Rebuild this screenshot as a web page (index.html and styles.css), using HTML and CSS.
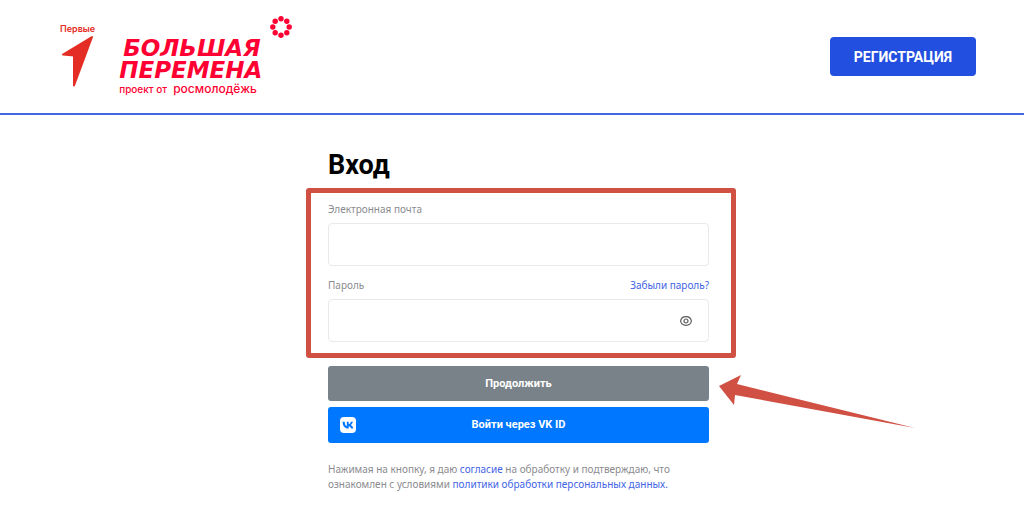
FILE: index.html
```html
<!DOCTYPE html>
<html lang="ru">
<head>
<meta charset="utf-8">
<meta name="viewport" content="width=device-width, initial-scale=1">
<title>Вход</title>
<link rel="stylesheet" href="styles.css">
</head>
<body>
<header class="header">
  <div class="logos">
    <div class="first">
      <span class="first-name">Первые</span>
      <svg class="first-mark" width="34" height="52" viewBox="0 0 34 52" aria-hidden="true"><path d="M31 2 13 50.500V20.500L2 19.500Z" fill="#e42d24" stroke="#e42d24" stroke-width="2" stroke-linejoin="round"/></svg>
    </div>
    <div class="peremena">
      <div class="peremena-title">БОЛЬШАЯ<br>ПЕРЕМЕНА</div>
      <div class="peremena-sub"><span>проект от</span><span class="rosmol">росмолодёжь</span></div>
      <svg class="dots" width="22" height="22" viewBox="0 0 22 22" aria-hidden="true"><g fill="#ff0032"><circle cx="11" cy="2.800" r="2.700"/><circle cx="16.800" cy="5.200" r="2.700"/><circle cx="19.200" cy="11" r="2.700"/><circle cx="16.800" cy="16.800" r="2.700"/><circle cx="11" cy="19.200" r="2.700"/><circle cx="5.200" cy="16.800" r="2.700"/><circle cx="2.800" cy="11" r="2.700"/><circle cx="5.200" cy="5.200" r="2.700"/></g></svg>
    </div>
  </div>
  <button class="register" type="button">РЕГИСТРАЦИЯ</button>
</header>
<main class="main">
  <form class="login">
    <h1 class="title">Вход</h1>
    <div class="fields">
      <div class="field">
        <div class="label-row"><label for="email">Электронная почта</label></div>
        <input class="input" id="email" type="email">
      </div>
      <div class="field">
        <div class="label-row"><label for="password">Пароль</label><a class="link" href="#">Забыли пароль?</a></div>
        <div class="password">
          <input class="input" id="password" type="password">
          <button class="eye" type="button" aria-label="Показать пароль"><svg width="12" height="10" viewBox="0 0 12 10" fill="none" stroke="#5a5a5a" stroke-width="1.200"><path d="M.6 5C1.100 2 3.200.7 6 .7S10.900 2 11.400 5C10.900 8 8.800 9.300 6 9.300S1.100 8 .6 5Z"/><circle cx="6" cy="5" r="2"/></svg></button>
        </div>
      </div>
    </div>
    <div class="actions">
      <button class="button continue" type="submit">Продолжить</button>
      <button class="button vk" type="button"><svg class="vk-icon" width="16" height="16" viewBox="0 0 16 16" aria-hidden="true"><rect width="16" height="16" rx="4" fill="#fff"/><path d="M8.400 11.500C4.700 11.500 2.700 9 2.600 4.700H4.700C4.800 7.700 5.900 8.900 6.800 9.100V4.700H8.700V7.300C9.600 7.200 10.500 6.100 10.900 4.700H12.900C12.600 6.300 11.500 7.500 10.700 8 11.500 8.400 12.800 9.400 13.300 11.500H11.200C10.800 10.200 9.900 9.400 8.700 9.200V11.500Z" fill="#07f"/></svg>Войти через VK ID</button>
      <svg class="arrow" width="198" height="56" viewBox="0 0 198 56" aria-hidden="true"><path d="M1 12 23 1 19 10 197 54 17 21 16 31Z" fill="#d15044"/></svg>
    </div>
    <p class="terms">Нажимая на кнопку, я даю <a class="link" href="#">согласие</a> на обработку и подтверждаю, что ознакомлен с условиями <a class="link" href="#">политики обработки персональных данных.</a></p>
  </form>
</main>
</body>
</html>
```
FILE: styles.css
```css
* { box-sizing: border-box; }
body {
  margin: 0;
  background: #fff;
  color: #000;
  font-family: Roboto, "Liberation Sans", sans-serif;
  overflow-x: hidden;
}
.header {
  display: flex;
  align-items: center;
  justify-content: space-between;
  padding: 16px 48px 16px 60px;
  border-bottom: 2px solid #4268df;
}
.logos { display: flex; align-items: flex-start; gap: 24px; }
.first { display: flex; flex-direction: column; padding-top: 6px; color: #e42d24; }
.first-name { font: 600 9px/13px Inter, sans-serif; }
.first-mark { display: block; margin-left: 1px; }
.peremena { position: relative; padding-top: 21px; color: #ff0032; }
.peremena-title { font: italic bold 23px/22px "DejaVu Sans", sans-serif; text-indent: 4px; }
.peremena-sub {
  display: flex;
  align-items: baseline;
  gap: 6px;
  font: 500 10px/15px Inter, sans-serif;
}
.rosmol { font-size: 12px; }
.dots { position: absolute; top: 0; left: 151px; }
.register {
  padding: 0 24px;
  height: 39px;
  border: 0;
  border-radius: 4px;
  background: #224fe0;
  color: #fff;
  font: 700 14px/20px Roboto, sans-serif;
}
.main { padding: 34px 0 24px 13px; }
.login { width: 100%; max-width: 381px; margin: 0 auto; }
.title { margin: 0; font-size: 27px; line-height: 32px; font-weight: 700; }
.fields {
  position: relative;
  display: grid;
  gap: 11px;
  padding: 20px 0 24px;
}
.fields::after {
  content: "";
  position: absolute;
  inset: 7px -27px 8px -22px;
  border: 5px solid #d15044;
  border-radius: 3px;
  pointer-events: none;
}
.label-row {
  display: flex;
  justify-content: space-between;
  padding-bottom: 6px;
  color: #8b8b8f;
  font: 10px/16px "Noto Sans", sans-serif;
}
.link { color: #4263e6; text-decoration: none; }
.input {
  display: block;
  width: 100%;
  height: 43px;
  padding: 0 16px;
  border: 1px solid #e9e9eb;
  border-radius: 4px;
  background: #fff;
  font: 13px/20px Roboto, sans-serif;
}
.password { position: relative; }
.eye {
  position: absolute;
  top: 0;
  bottom: 0;
  right: 17px;
  display: flex;
  align-items: center;
  padding: 0;
  border: 0;
  background: none;
}
.actions { position: relative; display: grid; gap: 6px; }
.button {
  position: relative;
  width: 100%;
  border: 0;
  border-radius: 3px;
  color: #fff;
  font: 700 11px/16px Roboto, sans-serif;
}
.continue { height: 35px; background: #7a8289; }
.vk { height: 36px; background: #07f; }
.vk-icon { position: absolute; left: 12px; top: 10px; }
.arrow { position: absolute; left: 100%; top: 8px; margin-left: 9px; }
.terms {
  margin: 19px 0 0;
  color: #8b8b8f;
  font: 10px/15px "Noto Sans", sans-serif;
}
```
